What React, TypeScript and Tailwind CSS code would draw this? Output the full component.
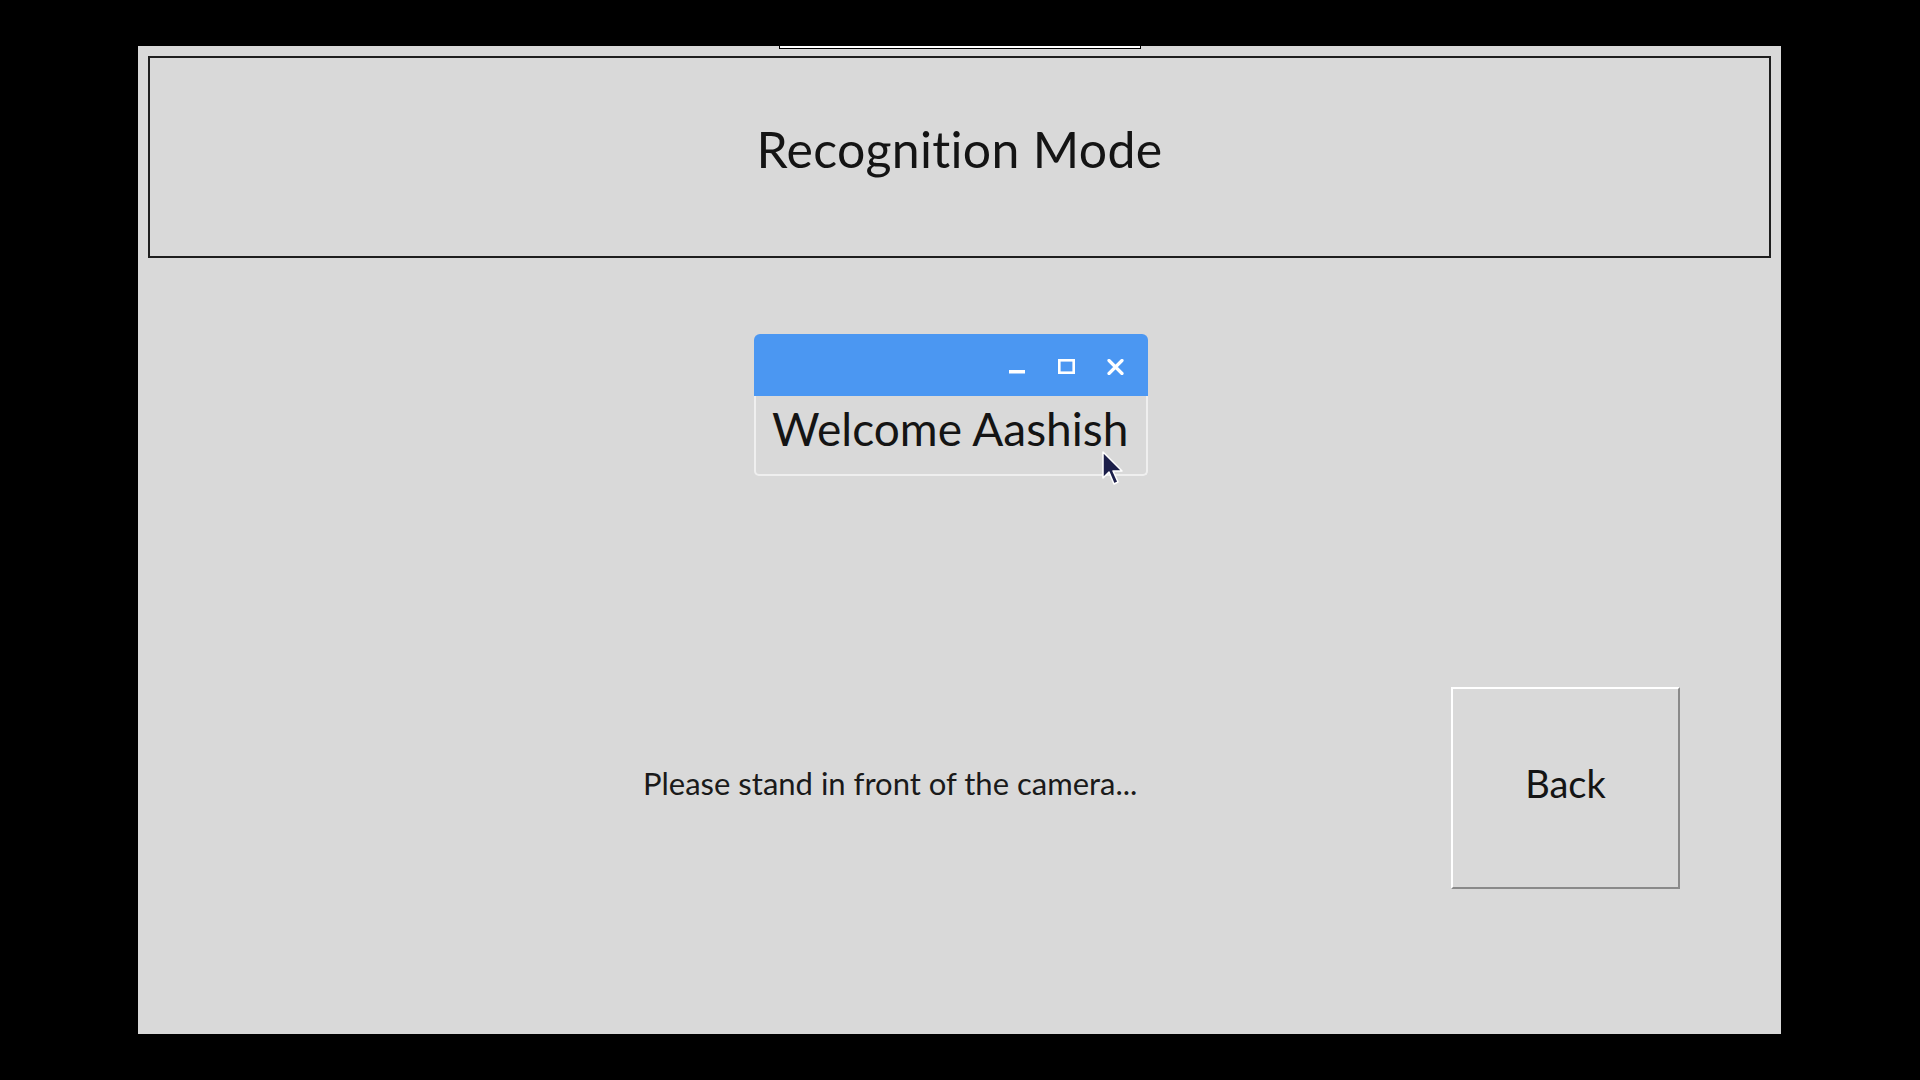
const Cursor = () => (
  <svg width="24" height="38" viewBox="0 0 24 38" className="absolute left-[347px] top-[116px]">
    <path d="M2 2 L2 28 L8 22 L13 34 L17 32 L12 21 L21 21 Z" fill="#1c1f4a" stroke="#ffffff" strokeWidth="1.5" strokeLinejoin="round" />
  </svg>
);

const WelcomeDialog = () => (
  <div className="absolute left-[616px] top-[288px] w-[394px]">
    <div className="h-[62px] rounded-t-[6px] bg-[#4b97f2] flex items-center justify-end gap-[32px] pr-[24px] pt-[4px]">
      <svg width="17" height="16" viewBox="0 0 17 16">
        <rect x="0" y="11" width="16" height="3.5" fill="#ffffff" />
      </svg>
      <svg width="17" height="16" viewBox="0 0 17 16">
        <rect x="1.3" y="1.3" width="14.4" height="12.4" fill="none" stroke="#ffffff" strokeWidth="2.6" />
      </svg>
      <svg width="17" height="16" viewBox="0 0 17 16">
        <path d="M2 1.5 L15 14.5 M15 1.5 L2 14.5" stroke="#ffffff" strokeWidth="3.2" strokeLinecap="round" />
      </svg>
    </div>
    <div className="h-[80px] border-x-2 border-b-2 border-[#efefef] rounded-b-[5px] bg-[#d9d9d9] pl-[16px] pt-[10px]">
      <p className="text-[46px] leading-none text-[#141414] [font-variant-ligatures:none]">Welcome Aashish</p>
    </div>
    <Cursor />
  </div>
);

const App = () => {
  return (
    <div className="w-[1920px] h-[1080px] bg-black pt-[46px] pl-[138px] font-['Lato',sans-serif]">
      <div className="relative w-[1643px] h-[988px] bg-[#d9d9d9] p-[10px]">
        <div className="absolute left-[641px] top-0 w-[362px] h-[3px] bg-white border-x border-b border-black" />

        <div className="h-[202px] border-2 border-[#1e1e1e] flex justify-center pt-[66px]">
          <h1 className="text-[50px] leading-none text-[#141414] tracking-[0.3px] [font-variant-ligatures:none]">Recognition Mode</h1>
        </div>

        <WelcomeDialog />

        <div className="mt-[429px] flex items-center pl-[495px] pr-[91px]">
          <p className="text-[31px] leading-none text-[#1a1a1a] mb-[10px] [font-variant-ligatures:none]">Please stand in front of the camera...</p>
          <button className="ml-auto w-[229px] h-[202px] border-2 border-t-white border-l-white border-r-[#8a8a8a] border-b-[#8a8a8a] bg-[#d9d9d9] flex items-center justify-center pb-[10px]">
            <span className="text-[38px] leading-none text-[#141414]">Back</span>
          </button>
        </div>
      </div>
    </div>
  );
};

export default App;
